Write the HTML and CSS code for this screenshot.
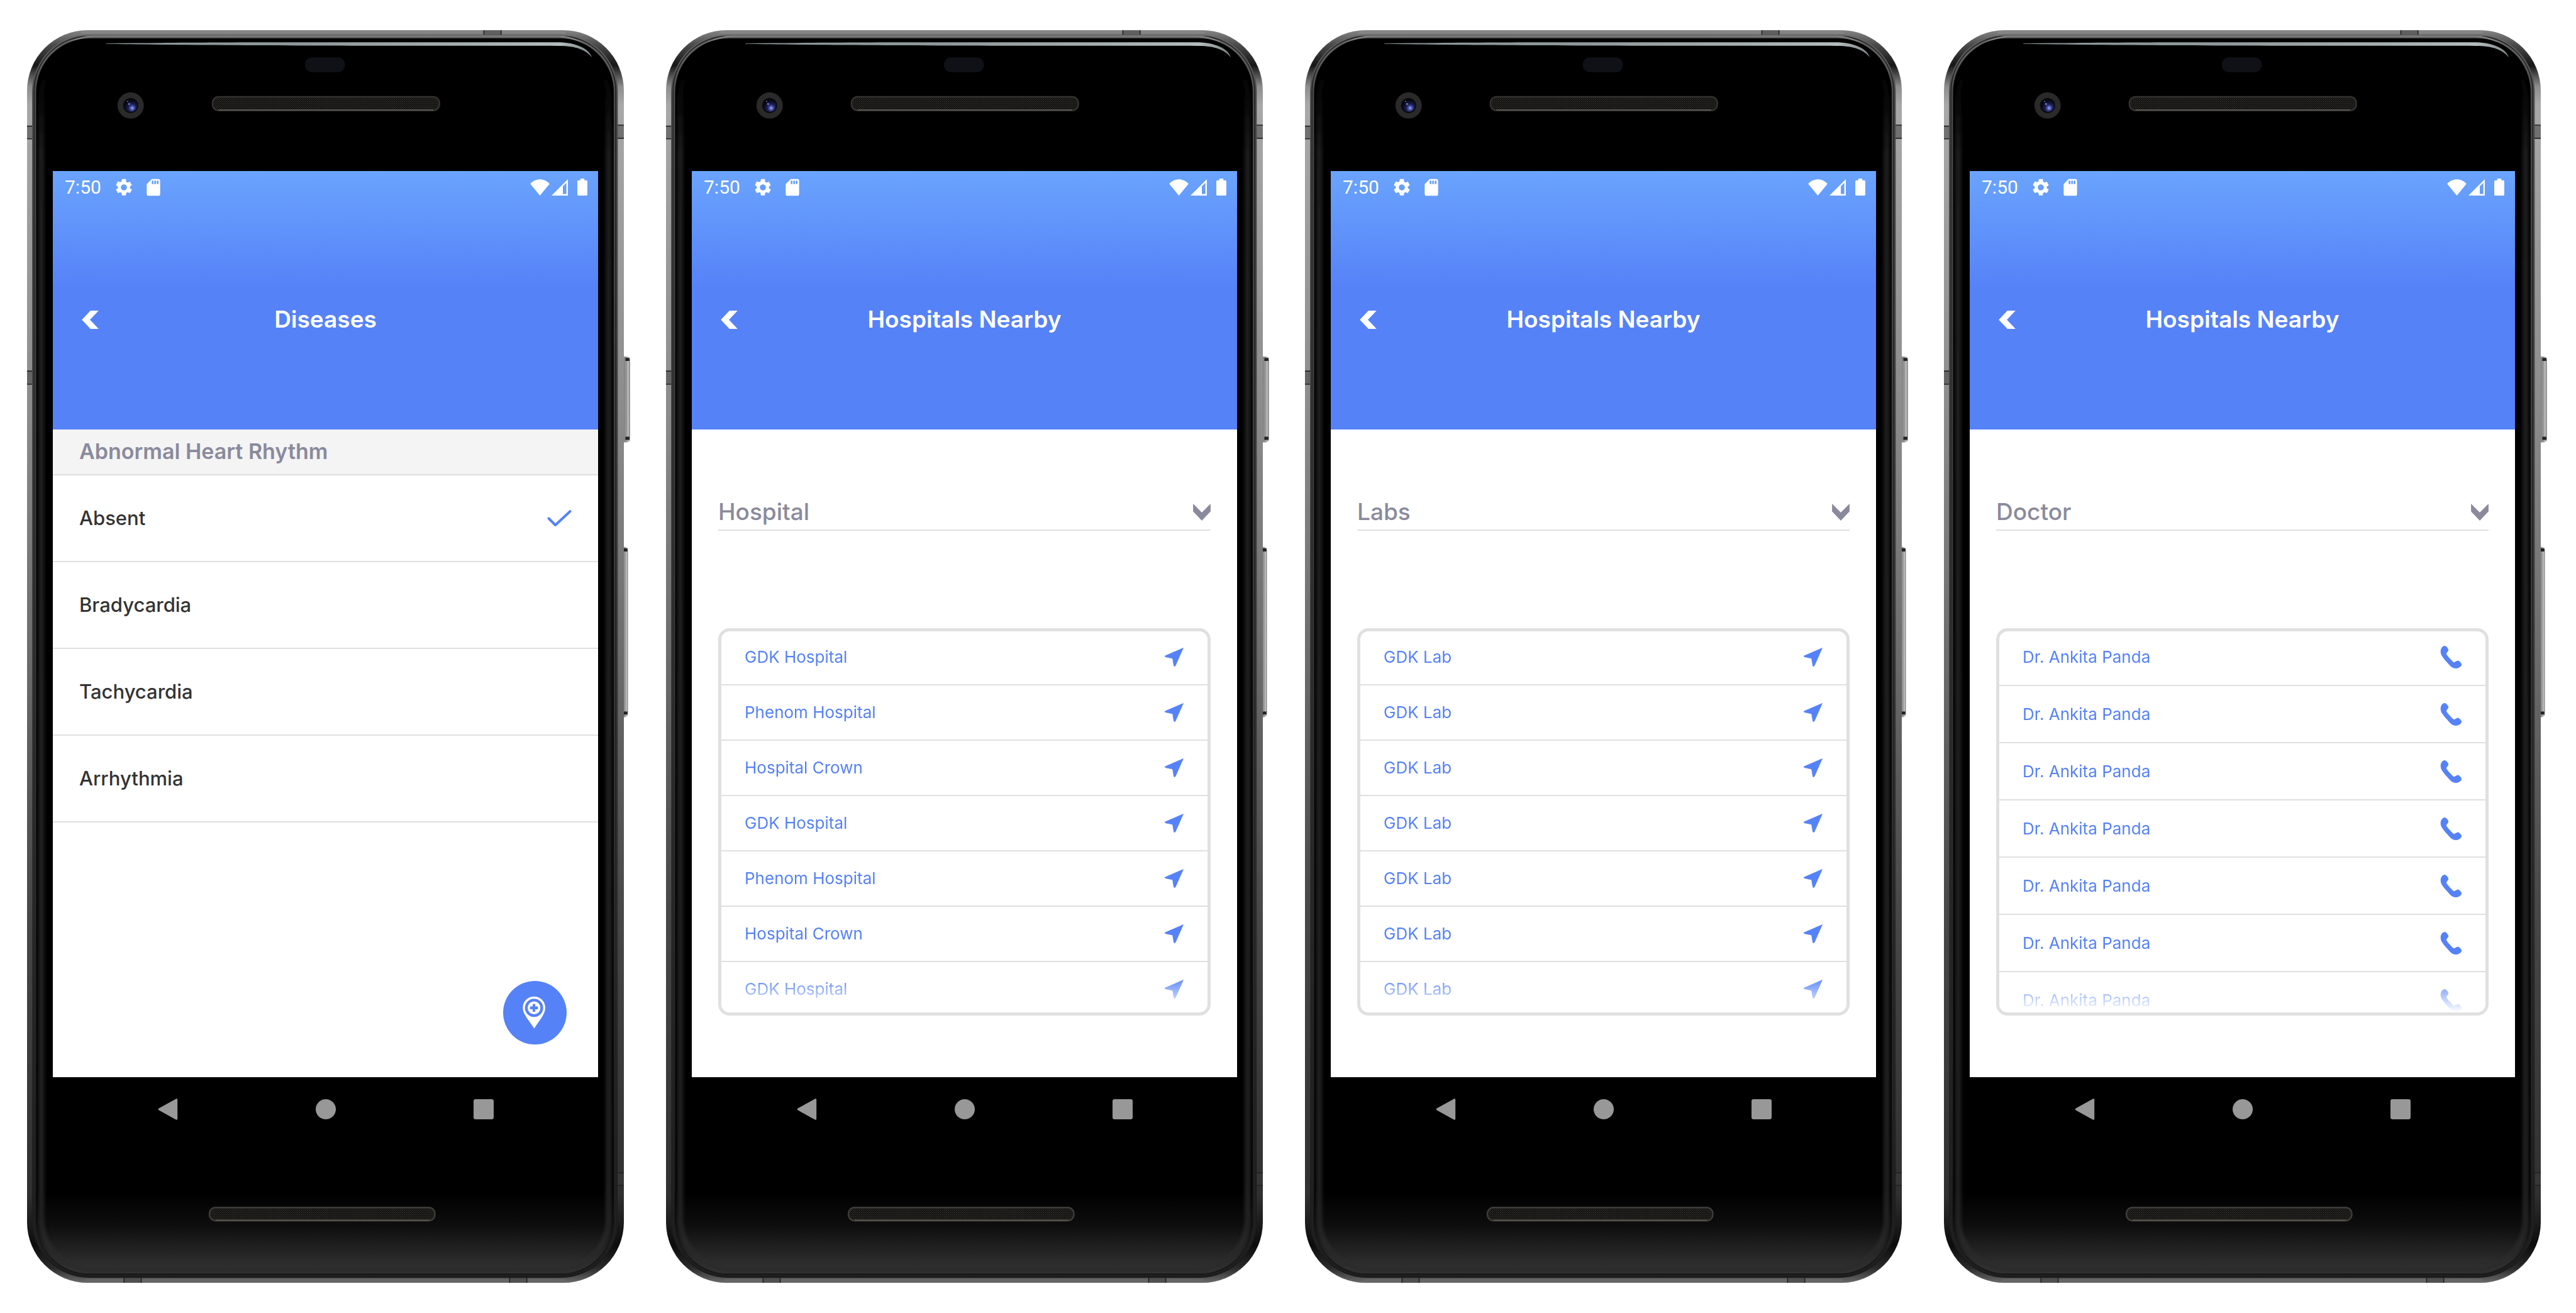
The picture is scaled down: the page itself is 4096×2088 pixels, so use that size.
FILE: index.html
```html
<!DOCTYPE html>
<html lang="en">
<head>
<meta charset="utf-8">
<title>Hospitals Nearby</title>
<link rel="stylesheet" href="styles.css">
</head>
<body>

<svg class="sprite" aria-hidden="true">
  <defs>
    <linearGradient id="metal" gradientUnits="userSpaceOnUse" x1="0" y1="60" x2="0" y2="2540">
      <stop offset="0" stop-color="#858585"/>
      <stop offset=".012" stop-color="#4a4a4a"/>
      <stop offset=".028" stop-color="#161616"/>
      <stop offset=".045" stop-color="#8e8e8e"/>
      <stop offset=".06" stop-color="#a8a8a8"/>
      <stop offset=".3" stop-color="#8c8c8c"/>
      <stop offset=".5" stop-color="#6c6c6c"/>
      <stop offset=".7" stop-color="#484848"/>
      <stop offset=".93" stop-color="#303030"/>
      <stop offset=".97" stop-color="#0c0c0c"/>
      <stop offset=".988" stop-color="#2a2a2a"/>
      <stop offset="1" stop-color="#6a6a6a"/>
    </linearGradient>
    <linearGradient id="rim" gradientUnits="userSpaceOnUse" x1="0" y1="60" x2="0" y2="2540">
      <stop offset="0" stop-color="#6a6a6a"/>
      <stop offset=".05" stop-color="#4c4c4c"/>
      <stop offset=".5" stop-color="#383838"/>
      <stop offset="1" stop-color="#1a1a1a"/>
    </linearGradient>
    <linearGradient id="sheen" gradientUnits="userSpaceOnUse" x1="0" y1="60" x2="0" y2="2540">
      <stop offset=".03" stop-color="#222" stop-opacity="0"/>
      <stop offset=".1" stop-color="#262626"/>
      <stop offset="1" stop-color="#2c2c2c"/>
    </linearGradient>
    <linearGradient id="chin" gradientUnits="userSpaceOnUse" x1="0" y1="2360" x2="0" y2="2522">
      <stop offset="0" stop-color="#000"/>
      <stop offset=".4" stop-color="#0d0d0d"/>
      <stop offset=".85" stop-color="#2c2c2c"/>
      <stop offset="1" stop-color="#333"/>
    </linearGradient>
    <linearGradient id="key" x1="0" y1="0" x2="1" y2="0">
      <stop offset="0" stop-color="#555"/>
      <stop offset=".3" stop-color="#777"/>
      <stop offset=".7" stop-color="#9a9a9a"/>
      <stop offset=".85" stop-color="#c4c4c4"/>
      <stop offset="1" stop-color="#666"/>
    </linearGradient>
    <linearGradient id="glare" gradientUnits="userSpaceOnUse" x1="211" y1="0" x2="1175" y2="0">
      <stop offset="0" stop-color="#8c9698"/>
      <stop offset=".4" stop-color="#8d999a"/>
      <stop offset=".93" stop-color="#b4bdbe"/>
      <stop offset="1" stop-color="#7c8384"/>
    </linearGradient>
    <radialGradient id="lens" cx=".62" cy=".7" r=".6">
      <stop offset="0" stop-color="#a4aaf0"/>
      <stop offset=".25" stop-color="#4a52ac"/>
      <stop offset=".5" stop-color="#1a1f52"/>
      <stop offset="1" stop-color="#07070f"/>
    </radialGradient>
    <pattern id="mesh" width="4" height="4" patternUnits="userSpaceOnUse">
      <rect width="4" height="4" fill="#0f0f0e"/>
      <rect width="2" height="2" fill="#302e29"/>
      <rect x="2" y="2" width="2" height="2" fill="#232220"/>
    </pattern>
    <filter id="soft" x="-10%" y="-10%" width="120%" height="120%"><feGaussianBlur stdDeviation="4"/></filter>
    <clipPath id="face"><rect x="72" y="76" width="1143" height="2446" rx="106"/></clipPath>

    <g id="body">
      <rect x="1226" y="706" width="21" height="170" rx="6" fill="url(#key)"/>
      <path d="M1238 712h8M1238 868h8" stroke="#222" stroke-width="6"/>
      <rect x="1226" y="1083" width="17" height="337" rx="6" fill="url(#key)"/>
      <path d="M1235 1089h7M1235 1412h7" stroke="#222" stroke-width="6"/>
      <rect x="54" y="60" width="1181" height="2480" rx="120" fill="url(#metal)"/>
      <path d="M160 64H1120" stroke="#868686" stroke-width="6"/>
      <path d="M170 2535H1118" stroke="#666" stroke-width="5"/>
      <path fill="#3c3c3c" fill-opacity=".5" d="M958 60h34v18h-34zM54 250h18v25h-18zM1215 248h20v26h-20zM54 735h18v26h-18zM1215 2322h20v25h-20zM246 2522h34v18h-34zM1009 2522h34v18h-34z"/>
      <path fill="none" stroke="#222" stroke-width="2" d="M958 60v18M992 60v18M54 250h18M54 275h18M1215 248h20M1215 274h20M54 735h18M54 761h18M1215 2322h20M1215 2347h20M246 2522v18M280 2522v18M1009 2522v18M1043 2522v18"/>
      <rect x="64" y="69" width="1159" height="2461" rx="112" fill="url(#rim)"/>
      <rect x="68" y="72" width="1151" height="2454" rx="108" fill="none" stroke="#222" stroke-width="2"/>
      <path d="M74 200C78 130 124 73 184 72H1106C1164 73 1210 130 1214 200" fill="none" stroke="#8a8a8a" stroke-width="2"/>
      <rect x="72" y="76" width="1143" height="2446" rx="106" fill="#000"/>
      <g clip-path="url(#face)">
        <rect x="72" y="2360" width="1143" height="162" fill="url(#chin)"/>
        <rect x="82" y="94" width="1123" height="2420" rx="100" fill="none" stroke="url(#sheen)" stroke-width="9" filter="url(#soft)"/>
      </g>
      <path d="M211 86C330 85 420 84 560 84H1108C1140 85 1166 96 1172 114C1160 99 1140 91 1108 91C900 91 420 91 211 87Z" fill="url(#glare)"/>
      <rect x="604" y="114" width="79" height="29" rx="13" fill="#101116"/>
      <circle cx="259" cy="209" r="26" fill="#2a2a2b"/>
      <circle cx="259" cy="209" r="15" fill="#0a0a10"/>
      <circle cx="259" cy="209" r="13" fill="url(#lens)"/>
      <circle cx="256" cy="206" r="2" fill="#6f78d8"/>
      <circle cx="253" cy="201" r="1" fill="#b6bcff"/>
      <rect x="421" y="192" width="449" height="27" rx="12" fill="url(#mesh)" stroke="#333230" stroke-width="3"/>
      <path d="M433 218H858" stroke="#5e5a52" stroke-width="2"/>
      <rect x="415" y="2391" width="446" height="26" rx="12" fill="url(#mesh)" stroke="#3d3c39" stroke-width="3"/>
      <path d="M427 2416H850" stroke="#5e5a52" stroke-width="2"/>
    </g>
  </defs>

  <symbol id="gear" viewBox="0 0 24 24"><path d="M19.14 12.94c.04-.3.06-.61.06-.94 0-.32-.02-.64-.07-.94l2.03-1.58a.49.49 0 0 0 .12-.61l-1.92-3.32a.49.49 0 0 0-.59-.22l-2.39.96c-.5-.38-1.03-.7-1.62-.94l-.36-2.54A.48.48 0 0 0 13.920 2h-3.840c-.24 0-.43.17-.47.41l-.36 2.540c-.59.24-1.130.57-1.620.94l-2.390-.96a.48.48 0 0 0-.59.22L2.740 8.870c-.12.21-.08.47.12.61l2.030 1.580c-.05.3-.09.63-.09.94s.02.64.07.94l-2.030 1.580a.49.49 0 0 0-.12.61l1.920 3.320c.12.22.37.29.59.22l2.390-.96c.5.38 1.030.7 1.620.94l.36 2.540c.05.24.24.41.48.41h3.840c.24 0 .44-.17.47-.41l.36-2.540c.59-.24 1.130-.56 1.620-.94l2.390.96c.22.08.47 0 .59-.22l1.920-3.320c.12-.22.07-.47-.12-.61zM12 15.600A3.610 3.610 0 0 1 8.400 12c0-1.980 1.620-3.600 3.600-3.600s3.600 1.620 3.600 3.600-1.620 3.600-3.600 3.600z"/></symbol>
  <symbol id="sdcard" viewBox="0 0 24 24"><path fill-rule="evenodd" d="M18 2h-8L4 8v12c0 1.100.9 2 2 2h12c1.100 0 2-.9 2-2V4c0-1.100-.9-2-2-2zM12 8h-2V4h2v4zM15 8h-2V4h2v4zM18 8h-2V4h2v4z"/></symbol>
  <symbol id="wifi" viewBox="30 38 117 99"><path d="M30 66C62 30 115 30 147 66L88.500 137Z"/></symbol>
  <symbol id="signal" viewBox="157 40 98 98"><path fill-rule="evenodd" d="M255 40V138H157ZM225 82V129H246V62Z"/></symbol>
  <symbol id="battery" viewBox="312 39 60 102"><path d="M330 39h24v10h12q6 0 6 6v80q0 6-6 6h-48q-6 0-6-6V55q0-6 6-6h12z"/></symbol>
  <symbol id="back" viewBox="0 0 33 36"><path d="M0 18 17 0h16L16 18l17 18H17z"/></symbol>
  <symbol id="down" viewBox="0 0 34 33"><path d="M0 0 17 17 34 0V15L17 33 0 15z"/></symbol>
  <symbol id="check" viewBox="0 0 48 36"><path d="M3 18 16 31 45 4" fill="none" stroke="currentColor" stroke-width="5" stroke-linecap="round" stroke-linejoin="round"/></symbol>
  <symbol id="arrow" viewBox="0 0 40 40"><path d="M38 2 22.500 37q-1.500 2-3 .5L17 22.500 2.500 19.500Q1 18.500 2 17.500z" stroke="currentColor" stroke-linejoin="round"/></symbol>
  <symbol id="phone" viewBox="36 57 132 141"><path d="M64 60C72 61 84 76 86 84C85 93 76 98 73 108C82 124 102 146 118 159C127 158 133 148 143 148C151 149 163 162 165 171C163 184 148 195 133 195C118 195 106 190 94 177C74 155 54 133 45 118C36 100 38 84 43 75C48 66 57 60 64 60Z"/></symbol>
  <symbol id="pin" viewBox="48 42 378 378"><path fill="#fff" d="M232 135C269 135 299 163 299 202C299 240 258 284 233 325C208 284 165 240 165 202C165 163 195 135 232 135Z"/><circle cx="232" cy="202" r="54" fill="#5682f8"/><circle cx="232" cy="202" r="38" fill="#fff"/><path d="M224 179h15v15h16v16h-16v15h-15v-15h-16v-16h16z" fill="#5682f8"/></symbol>
  <symbol id="nav-back" viewBox="0 0 40 42"><path d="M37 2V40L3 21z" stroke="currentColor" stroke-width="4" stroke-linejoin="round"/></symbol>
  <symbol id="nav-home" viewBox="0 0 40 42"><circle cx="20" cy="21" r="20"/></symbol>
  <symbol id="nav-recent" viewBox="0 0 40 42"><rect y="1" width="40" height="40" rx="4"/></symbol>
</svg>

<main class="gallery">

  <section class="phone">
    <svg class="phone__body" viewBox="54 60 1181 2480" preserveAspectRatio="none" aria-hidden="true"><use href="#body"/></svg>
    <div class="screen">
      <header class="header">
        <div class="status"><span>7:50</span><svg class="status__icon"><use href="#gear"/></svg><svg class="status__icon"><use href="#sdcard"/></svg><svg class="status__wifi"><use href="#wifi"/></svg><svg class="status__signal"><use href="#signal"/></svg><svg class="status__battery"><use href="#battery"/></svg></div>
        <div class="titlebar"><button class="titlebar__back" aria-label="Back"><svg><use href="#back"/></svg></button><h1>Diseases</h1></div>
      </header>
      <h2 class="group" id="rhythm">Abnormal Heart Rhythm</h2>
      <div class="options" role="radiogroup" aria-labelledby="rhythm">
        <label class="option"><input type="radio" name="rhythm" checked><span>Absent</span><svg><use href="#check"/></svg></label>
        <label class="option"><input type="radio" name="rhythm"><span>Bradycardia</span><svg><use href="#check"/></svg></label>
        <label class="option"><input type="radio" name="rhythm"><span>Tachycardia</span><svg><use href="#check"/></svg></label>
        <label class="option"><input type="radio" name="rhythm"><span>Arrhythmia</span><svg><use href="#check"/></svg></label>
      </div>
      <button class="fab" aria-label="Find hospitals nearby"><svg><use href="#pin"/></svg></button>
    </div>
    <nav class="nav"><button aria-label="Back"><svg><use href="#nav-back"/></svg></button><button aria-label="Home"><svg><use href="#nav-home"/></svg></button><button aria-label="Recent apps"><svg><use href="#nav-recent"/></svg></button></nav>
  </section>

  <section class="phone">
    <svg class="phone__body" viewBox="54 60 1181 2480" preserveAspectRatio="none" aria-hidden="true"><use href="#body"/></svg>
    <div class="screen">
      <header class="header">
        <div class="status"><span>7:50</span><svg class="status__icon"><use href="#gear"/></svg><svg class="status__icon"><use href="#sdcard"/></svg><svg class="status__wifi"><use href="#wifi"/></svg><svg class="status__signal"><use href="#signal"/></svg><svg class="status__battery"><use href="#battery"/></svg></div>
        <div class="titlebar"><button class="titlebar__back" aria-label="Back"><svg><use href="#back"/></svg></button><h1>Hospitals Nearby</h1></div>
      </header>
      <div class="picker"><select aria-label="Category"><option selected>Hospital</option><option>Labs</option><option>Doctor</option></select><svg><use href="#down"/></svg></div>
      <div class="panel">
        <ul class="places">
          <li><a href="#">GDK Hospital<svg><use href="#arrow"/></svg></a></li>
          <li><a href="#">Phenom Hospital<svg><use href="#arrow"/></svg></a></li>
          <li><a href="#">Hospital Crown<svg><use href="#arrow"/></svg></a></li>
          <li><a href="#">GDK Hospital<svg><use href="#arrow"/></svg></a></li>
          <li><a href="#">Phenom Hospital<svg><use href="#arrow"/></svg></a></li>
          <li><a href="#">Hospital Crown<svg><use href="#arrow"/></svg></a></li>
          <li><a href="#">GDK Hospital<svg><use href="#arrow"/></svg></a></li>
        </ul>
      </div>
    </div>
    <nav class="nav"><button aria-label="Back"><svg><use href="#nav-back"/></svg></button><button aria-label="Home"><svg><use href="#nav-home"/></svg></button><button aria-label="Recent apps"><svg><use href="#nav-recent"/></svg></button></nav>
  </section>

  <section class="phone">
    <svg class="phone__body" viewBox="54 60 1181 2480" preserveAspectRatio="none" aria-hidden="true"><use href="#body"/></svg>
    <div class="screen">
      <header class="header">
        <div class="status"><span>7:50</span><svg class="status__icon"><use href="#gear"/></svg><svg class="status__icon"><use href="#sdcard"/></svg><svg class="status__wifi"><use href="#wifi"/></svg><svg class="status__signal"><use href="#signal"/></svg><svg class="status__battery"><use href="#battery"/></svg></div>
        <div class="titlebar"><button class="titlebar__back" aria-label="Back"><svg><use href="#back"/></svg></button><h1>Hospitals Nearby</h1></div>
      </header>
      <div class="picker"><select aria-label="Category"><option>Hospital</option><option selected>Labs</option><option>Doctor</option></select><svg><use href="#down"/></svg></div>
      <div class="panel">
        <ul class="places">
          <li><a href="#">GDK Lab<svg><use href="#arrow"/></svg></a></li>
          <li><a href="#">GDK Lab<svg><use href="#arrow"/></svg></a></li>
          <li><a href="#">GDK Lab<svg><use href="#arrow"/></svg></a></li>
          <li><a href="#">GDK Lab<svg><use href="#arrow"/></svg></a></li>
          <li><a href="#">GDK Lab<svg><use href="#arrow"/></svg></a></li>
          <li><a href="#">GDK Lab<svg><use href="#arrow"/></svg></a></li>
          <li><a href="#">GDK Lab<svg><use href="#arrow"/></svg></a></li>
        </ul>
      </div>
    </div>
    <nav class="nav"><button aria-label="Back"><svg><use href="#nav-back"/></svg></button><button aria-label="Home"><svg><use href="#nav-home"/></svg></button><button aria-label="Recent apps"><svg><use href="#nav-recent"/></svg></button></nav>
  </section>

  <section class="phone">
    <svg class="phone__body" viewBox="54 60 1181 2480" preserveAspectRatio="none" aria-hidden="true"><use href="#body"/></svg>
    <div class="screen">
      <header class="header">
        <div class="status"><span>7:50</span><svg class="status__icon"><use href="#gear"/></svg><svg class="status__icon"><use href="#sdcard"/></svg><svg class="status__wifi"><use href="#wifi"/></svg><svg class="status__signal"><use href="#signal"/></svg><svg class="status__battery"><use href="#battery"/></svg></div>
        <div class="titlebar"><button class="titlebar__back" aria-label="Back"><svg><use href="#back"/></svg></button><h1>Hospitals Nearby</h1></div>
      </header>
      <div class="picker"><select aria-label="Category"><option>Hospital</option><option>Labs</option><option selected>Doctor</option></select><svg><use href="#down"/></svg></div>
      <div class="panel">
        <ul class="places places--calls">
          <li><a href="#">Dr. Ankita Panda<svg><use href="#phone"/></svg></a></li>
          <li><a href="#">Dr. Ankita Panda<svg><use href="#phone"/></svg></a></li>
          <li><a href="#">Dr. Ankita Panda<svg><use href="#phone"/></svg></a></li>
          <li><a href="#">Dr. Ankita Panda<svg><use href="#phone"/></svg></a></li>
          <li><a href="#">Dr. Ankita Panda<svg><use href="#phone"/></svg></a></li>
          <li><a href="#">Dr. Ankita Panda<svg><use href="#phone"/></svg></a></li>
          <li><a href="#">Dr. Ankita Panda<svg><use href="#phone"/></svg></a></li>
        </ul>
      </div>
    </div>
    <nav class="nav"><button aria-label="Back"><svg><use href="#nav-back"/></svg></button><button aria-label="Home"><svg><use href="#nav-home"/></svg></button><button aria-label="Recent apps"><svg><use href="#nav-recent"/></svg></button></nav>
  </section>

</main>
</body>
</html>
```
FILE: styles.css
```css
:root {
  --blue: #5682f8;
  --line: #e0e0e0;
  --muted: #8a8a9c;
}

* { box-sizing: border-box; }

body {
  margin: 0;
  background: #fff;
  font-family: Inter, "Open Sans", sans-serif;
}

h1, h2, ul { margin: 0; padding: 0; }

button {
  padding: 0;
  border: 0;
  background: none;
  color: inherit;
  font: inherit;
}

svg { display: block; fill: currentColor; }

.sprite { position: absolute; width: 0; height: 0; }

.gallery {
  display: flex;
  gap: 67px;
  padding: 48px 56px 48px 43px;
}

/* Device */
.phone {
  position: relative;
  flex: 1;
  min-width: 0;
  padding: 224px 41px 225px;
}

.phone__body {
  position: absolute;
  inset: 0;
  z-index: -1;
  width: 100%;
  height: 100%;
  overflow: visible;
}

.screen {
  position: relative;
  min-height: 1441px;
  background: #fff;
}

.nav {
  display: flex;
  align-items: center;
  justify-content: center;
  gap: 219px;
  height: 102px;
  color: #989898;
}

.nav svg { width: 32px; height: 34px; }

/* Header */
.header {
  height: 411px;
  background: linear-gradient(#6aa4fd, var(--blue) 184px);
  color: #fff;
}

.status {
  display: flex;
  align-items: center;
  height: 51px;
  padding: 0 17px 0 19px;
  font: 400 30px/36px Roboto, sans-serif;
}

.status__icon { width: 32px; height: 32px; margin-left: 15px; }
.status span { margin-right: 5px; }
.status__wifi { width: 31px; height: 26px; margin-left: auto; }
.status__signal { width: 26px; height: 26px; margin-left: 3px; }
.status__battery { width: 16px; height: 27px; margin-left: 15px; }

.titlebar {
  display: grid;
  grid-template-columns: 27px 1fr 27px;
  align-items: center;
  padding: 161px 46px 0;
}

.titlebar__back svg { width: 27px; height: 29px; }

.titlebar h1 {
  font-size: 37px;
  line-height: 48px;
  font-weight: 600;
  text-align: center;
}

/* Diseases */
.group {
  padding: 12px 42px 13px;
  border-bottom: 2px solid #dedede;
  background: #f4f4f4;
  color: var(--muted);
  font-size: 34px;
  line-height: 46px;
  font-weight: 600;
}

.option {
  position: relative;
  display: flex;
  align-items: center;
  justify-content: space-between;
  height: 138px;
  padding: 0 42px;
  border-bottom: 2px solid var(--line);
  color: #333;
  font-size: 31px;
  line-height: 40px;
  font-weight: 500;
}

.option input {
  position: absolute;
  inset: 0;
  margin: 0;
  opacity: 0;
}

.option svg {
  display: none;
  width: 39px;
  height: 29px;
  color: var(--blue);
}

.option input:checked ~ svg { display: block; }

.fab {
  position: absolute;
  right: 50px;
  bottom: 52px;
  width: 101px;
  height: 101px;
  border-radius: 50%;
  background: var(--blue);
}

.fab svg { width: 101px; height: 101px; }

/* Nearby */
.picker {
  display: grid;
  grid-template-columns: 1fr 28px;
  align-items: center;
  margin: 103px 42px 0;
  border-bottom: 2px solid var(--line);
  color: var(--muted);
}

.picker select {
  grid-area: 1 / 1 / 2 / 3;
  width: 100%;
  height: 56px;
  padding: 0;
  border: 0;
  appearance: none;
  background: none;
  color: inherit;
  font: 500 37px/56px Inter, "Open Sans", sans-serif;
}

.picker svg {
  grid-area: 1 / 2;
  width: 28px;
  height: 27px;
  pointer-events: none;
}

.panel {
  margin: 155px 42px 0;
  border: 5px solid var(--line);
  border-radius: 18px;
  overflow: hidden;
}

.places {
  height: 608px;
  margin-top: -2px;
  overflow: hidden;
  list-style: none;
  mask-image: linear-gradient(#000 calc(100% - 58px), transparent);
}

.places a {
  display: flex;
  align-items: center;
  justify-content: space-between;
  height: 88px;
  padding: 0 37px;
  border-bottom: 2px solid var(--line);
  color: var(--blue);
  font-size: 26px;
  line-height: 36px;
  text-decoration: none;
}

.places svg { width: 32px; height: 32px; }

.places--calls { height: 610px; margin-top: -4px; }
.places--calls a { height: 91px; }
.places--calls svg { width: 35px; height: 38px; }
```
